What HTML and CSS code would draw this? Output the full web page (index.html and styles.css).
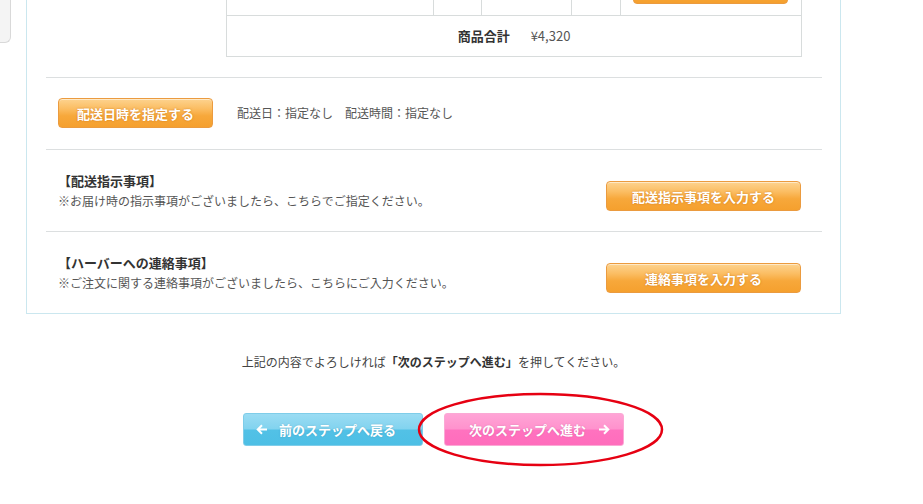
FILE: index.html
```html
<!DOCTYPE html>
<html lang="ja">
<head>
<meta charset="utf-8">
<title>ご注文手続き</title>
<link rel="stylesheet" href="styles.css">
</head>
<body>
  <div class="side"></div>
  <div class="page">
    <div class="panel">
      <table class="cart">
        <colgroup>
          <col class="c1"><col class="c2"><col class="c3"><col class="c4"><col class="c5">
        </colgroup>
        <tr class="item-row">
          <td></td><td></td><td></td><td></td>
          <td class="act"><span class="btn btn-orange btn-small"></span></td>
        </tr>
        <tr class="total-row">
          <td colspan="5"><span class="total-label">商品合計</span><span class="total-price">¥4,320</span></td>
        </tr>
      </table>

      <div class="section section-date">
        <span class="btn btn-orange btn-date">配送日時を指定する</span>
        <span class="date-info">配送日：指定なし　配送時間：指定なし</span>
      </div>

      <div class="section section-note">
        <div class="note-text">
          <p class="note-title">【配送指示事項】</p>
          <p class="note-desc">※お届け時の指示事項がございましたら、こちらでご指定ください。</p>
        </div>
        <span class="btn btn-orange btn-wide">配送指示事項を入力する</span>
      </div>

      <div class="section section-note">
        <div class="note-text">
          <p class="note-title">【ハーバーへの連絡事項】</p>
          <p class="note-desc">※ご注文に関する連絡事項がございましたら、こちらにご入力ください。</p>
        </div>
        <span class="btn btn-orange btn-wide">連絡事項を入力する</span>
      </div>
    </div>

    <p class="confirm">上記の内容でよろしければ<strong>「次のステップへ進む」</strong>を押してください。</p>

    <div class="nav">
      <span class="btn-step btn-back">
        <svg class="arrow" width="12" height="11" viewBox="0 0 12 11"><path d="M11 5.5H2M6 1.2L1.7 5.5L6 9.8" fill="none" stroke="#fff" stroke-width="2"/></svg>
        <span>前のステップへ戻る</span>
      </span>
      <span class="next-wrap">
        <span class="btn-step btn-next">
          <span>次のステップへ進む</span>
          <svg class="arrow" width="12" height="11" viewBox="0 0 12 11"><path d="M1 5.5H10M6 1.2L10.3 5.5L6 9.8" fill="none" stroke="#fff" stroke-width="2"/></svg>
        </span>
        <svg class="circle" width="247" height="75" viewBox="0 0 247 75"><ellipse cx="123.5" cy="37.5" rx="121.5" ry="35.5" fill="none" stroke="#e60012" stroke-width="2.5"/></svg>
      </span>
    </div>
  </div>
</body>
</html>
```

FILE: styles.css
```css
* { box-sizing: border-box; }
html, body { margin: 0; padding: 0; background: #fff; }
body {
  display: flex;
  align-items: flex-start;
  font-family: "Noto Sans CJK JP", "Noto Sans", sans-serif;
  color: #333;
  font-size: 12px;
  overflow: hidden;
  height: 504px;
}
p { margin: 0; }

.side {
  width: 11px;
  height: 43px;
  background: #f4f4f4;
  border-right: 1px solid #d9d9d9;
  border-bottom: 1px solid #d9d9d9;
  border-bottom-right-radius: 6px;
  flex: none;
}

.page {
  width: 815px;
  margin-left: 15px;
  margin-top: -39px;
  flex: none;
}

.panel {
  border: 1px solid #cbe7ef;
  padding: 0 18px 0 19px;
}

.cart {
  width: 575px;
  margin-left: 180px;
  border-collapse: collapse;
  table-layout: fixed;
}
.cart td { border: 1px solid #d8dcdc; padding: 0; }
.c1 { width: 207px; }
.c2 { width: 48px; }
.c3 { width: 90px; }
.c4 { width: 49px; }
.c5 { width: 181px; }
.item-row td { height: 53px; }
.item-row .act { padding: 11px 0 11px 12px; }
.total-row td {
  height: 41px;
  text-align: center;
  line-height: 20px;
}
.total-label { font-size: 13px; font-weight: bold; color: #333; }
.total-price { font-size: 13px; color: #555; margin-left: 21px; }

.btn {
  display: inline-flex;
  align-items: center;
  justify-content: center;
  height: 30px;
  border: 1px solid #eb9b3f;
  border-radius: 4px;
  color: #fff;
  font-size: 13px;
  font-weight: bold;
  text-shadow: 0 0 2px rgba(190, 100, 10, 0.7);
  flex: none;
}
.item-row .act .btn-small { display: flex; width: 155px; }
.btn-orange {
  background: linear-gradient(to bottom, #fdd38f 0%, #fbbd62 35%, #f7a83b 60%, #f5a02e 100%);
  box-shadow: inset 0 1px 0 rgba(255, 255, 255, 0.5);
}

.section {
  border-top: 1px solid #dcdfe0;
  display: flex;
  margin-top: 0;
}
.section-date {
  margin-top: 20px;
  padding: 20px 21px 21px 12px;
  align-items: center;
}
.btn-date { width: 155px; }
.date-info {
  margin-left: 24px;
  color: #555;
  font-size: 12px;
  line-height: 20px;
}

.section-note {
  padding: 21px 21px 20px 12px;
  align-items: flex-end;
  justify-content: space-between;
}
.note-title {
  font-size: 13px;
  font-weight: bold;
  line-height: 20px;
  color: #333;
}
.note-desc {
  font-size: 12px;
  line-height: 20px;
  color: #555;
}
.btn-wide { width: 195px; }

.confirm {
  margin-top: 38px;
  text-align: center;
  line-height: 20px;
  font-size: 12px;
  color: #444;
}
.confirm strong { color: #333; }

.nav {
  margin-top: 41px;
  display: flex;
  justify-content: center;
  gap: 21px;
}
.btn-step {
  display: flex;
  align-items: center;
  width: 180px;
  height: 33px;
  border-radius: 3px;
  color: #fff;
  font-size: 13px;
  font-weight: bold;
  text-shadow: 0 0 2px rgba(0, 0, 0, 0.15);
}
.btn-back {
  border: 1px solid #7fcde9;
  background: linear-gradient(to bottom, #9adcf3 0%, #82d3ef 48%, #52c1e6 52%, #4dbfe5 100%);
  padding-left: 12px;
  gap: 11px;
}
.next-wrap { position: relative; display: block; }
.btn-next {
  border: 1px solid #fba9d5;
  background: linear-gradient(to bottom, #ffa4d6 0%, #ff92cd 48%, #ff72bf 52%, #ff6dbc 100%);
  padding-left: 24px;
  gap: 12px;
}
.arrow { flex: none; }
.circle {
  position: absolute;
  left: -27px;
  top: -21px;
  pointer-events: none;
}
```
